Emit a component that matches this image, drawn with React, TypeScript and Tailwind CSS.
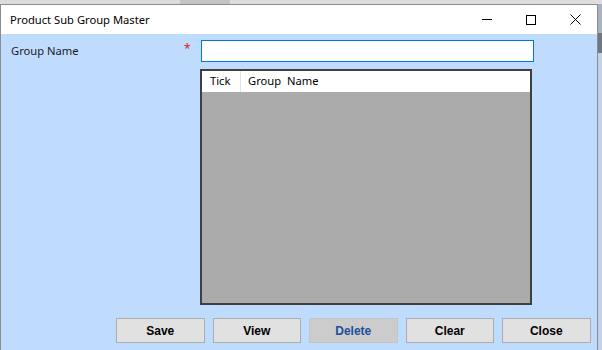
import React from "react";

const ui = { fontFamily: '"Noto Sans", "Open Sans", sans-serif' };
const btnFont = { fontFamily: '"Liberation Sans", Arial, sans-serif' };

function Btn({ label, disabled }: { label: string; disabled?: boolean }) {
  return (
    <button
      style={btnFont}
      className={
        disabled
          ? "w-[88.5px] h-[25px] border border-[#c4c4c4] bg-[#cccccc] text-[12px] font-bold text-[#1f4e9c]"
          : "w-[88.5px] h-[25px] border border-[#adadad] bg-[#e1e1e1] text-[12px] font-bold text-black"
      }
    >
      {label}
    </button>
  );
}

export default function App() {
  return (
    <div className="w-[602px] h-[350px] bg-[#d6d6d6] flex flex-col overflow-hidden" style={ui}>
      <div className="h-[4px] flex shrink-0">
        <div className="w-[180px] bg-[#dcdcdc]" />
        <div className="w-[50px] bg-[#c4c4c4]" />
        <div className="flex-1 bg-[#dedede]" />
      </div>
      <div className="flex flex-1 min-h-0">
        <div className="w-[598px] flex flex-col border-l border-t border-r border-[#8c8c8c]">
          {/* title bar */}
          <div className="h-[29px] bg-white flex items-center shrink-0">
            <span className="pl-[9px] text-[11.2px] text-black flex-1 leading-none">Product Sub Group Master</span>
            <div className="flex items-center h-full">
              <div className="w-[44px] h-full flex items-center justify-center">
                <div className="w-[10px] h-[1px] bg-black" />
              </div>
              <div className="w-[44px] h-full flex items-center justify-center">
                <div className="w-[10px] h-[10px] border border-black" />
              </div>
              <div className="w-[44px] h-full flex items-center justify-center">
                <svg width="11" height="11" viewBox="0 0 11 11">
                  <path d="M0.5 0.5 L10.5 10.5 M10.5 0.5 L0.5 10.5" stroke="#000" strokeWidth="1" />
                </svg>
              </div>
            </div>
          </div>
          {/* body */}
          <div className="flex-1 bg-[#bfdcff] pt-[6px] flex flex-col">
            <div className="flex items-center h-[22px]">
              <span className="pl-[10px] w-[183px] text-[11.2px] text-[#1a1a1a]">Group Name</span>
              <span className="w-[17px] text-[12px] text-[#e02020] leading-none -mt-[4px]">*</span>
              <div className="w-[333px] h-[22px] bg-white border border-[#0078d7]" />
            </div>
            <div className="pl-[199px] pt-[7px]">
              <div className="w-[332px] h-[236px] border-2 border-[#3f3f3f] bg-[#ababab] flex flex-col">
                <div className="h-[21px] bg-white flex items-center text-[11.2px] text-black">
                  <div className="w-[39px] h-full flex items-center pl-[8px] border-r border-[#e3e3e3]">Tick</div>
                  <div className="pl-[7px] whitespace-pre">Group  Name</div>
                </div>
              </div>
            </div>
            <div className="flex gap-[8px] pl-[115px] pt-[13px]">
              <Btn label="Save" />
              <Btn label="View" />
              <Btn label="Delete" disabled />
              <Btn label="Clear" />
              <Btn label="Close" />
            </div>
          </div>
        </div>
        <div className="flex-1 flex flex-col">
          <div className="h-[29px] bg-[#a9b3bd]" />
          <div className="h-[20px] bg-[#6f7882]" />
          <div className="flex-1 bg-[#c3d3e6]" />
        </div>
      </div>
    </div>
  );
}
